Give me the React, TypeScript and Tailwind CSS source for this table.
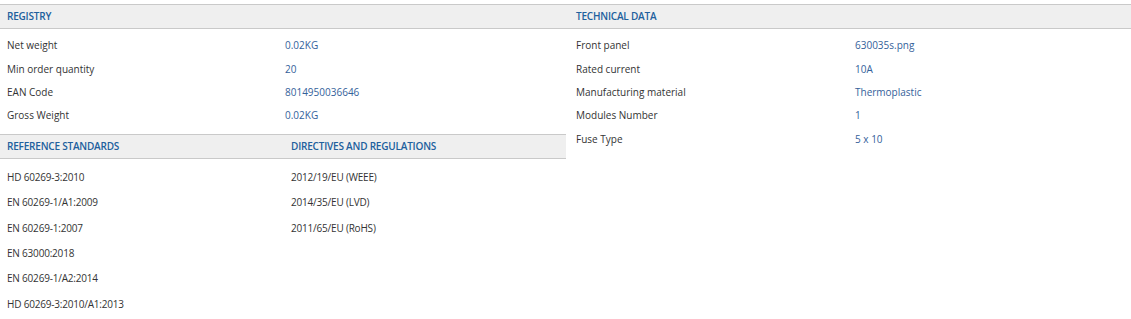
import React from 'react';

const registry = [
  ['Net weight', '0.02KG'],
  ['Min order quantity', '20'],
  ['EAN Code', '8014950036646'],
  ['Gross Weight', '0.02KG'],
];

const technical = [
  ['Front panel', '630035s.png'],
  ['Rated current', '10A'],
  ['Manufacturing material', 'Thermoplastic'],
  ['Modules Number', '1'],
  ['Fuse Type', '5 x 10'],
];

const standards = [
  'HD 60269-3:2010',
  'EN 60269-1/A1:2009',
  'EN 60269-1:2007',
  'EN 63000:2018',
  'EN 60269-1/A2:2014',
  'HD 60269-3:2010/A1:2013',
];

const directives = ['2012/19/EU (WEEE)', '2014/35/EU (LVD)', '2011/65/EU (RoHS)'];

function Header({ children, className = '' }: { children: React.ReactNode; className?: string }) {
  return (
    <div className={`h-[25px] flex items-center bg-[#efefef] border-y border-[#c9c9c9] text-[10px] font-semibold uppercase tracking-[-0.2px] text-[#21609d] ${className}`}>
      {children}
    </div>
  );
}

export default function App() {
  return (
    <div className="w-[1131px] h-[319px] bg-white pt-[4px] flex text-[10px] text-[#333]" style={{ fontFamily: '"Open Sans", "Liberation Sans", sans-serif' }}>
      {/* left column */}
      <div className="w-[566px] flex flex-col">
        <Header className="px-[7px]">Registry</Header>
        <div className="pt-[5px] pb-[6px]">
          {registry.map(([k, v]) => (
            <div key={k} className="h-[23.4px] flex items-center">
              <span className="w-[285px] pl-[7px]">{k}</span>
              <span className="text-[#34619a]">{v}</span>
            </div>
          ))}
        </div>

        <Header>
          <span className="w-[291px] pl-[7px]">Reference standards</span>
          <span>Directives and regulations</span>
        </Header>
        <div className="flex pt-[6px] tracking-[-0.2px]">
          <div className="w-[291px] pl-[7px]">
            {standards.map((s) => (
              <div key={s} className="h-[25.4px] flex items-center">{s}</div>
            ))}
          </div>
          <div>
            {directives.map((d) => (
              <div key={d} className="h-[25.4px] flex items-center">{d}</div>
            ))}
          </div>
        </div>
      </div>

      {/* right column */}
      <div className="flex-1 flex flex-col">
        <Header className="pl-[10px]">Technical data</Header>
        <div className="pt-[5px]">
          {technical.map(([k, v]) => (
            <div key={k} className="h-[23.4px] flex items-center">
              <span className="w-[289px] pl-[10px]">{k}</span>
              <span className="text-[#34619a]">{v}</span>
            </div>
          ))}
        </div>
      </div>
    </div>
  );
}
